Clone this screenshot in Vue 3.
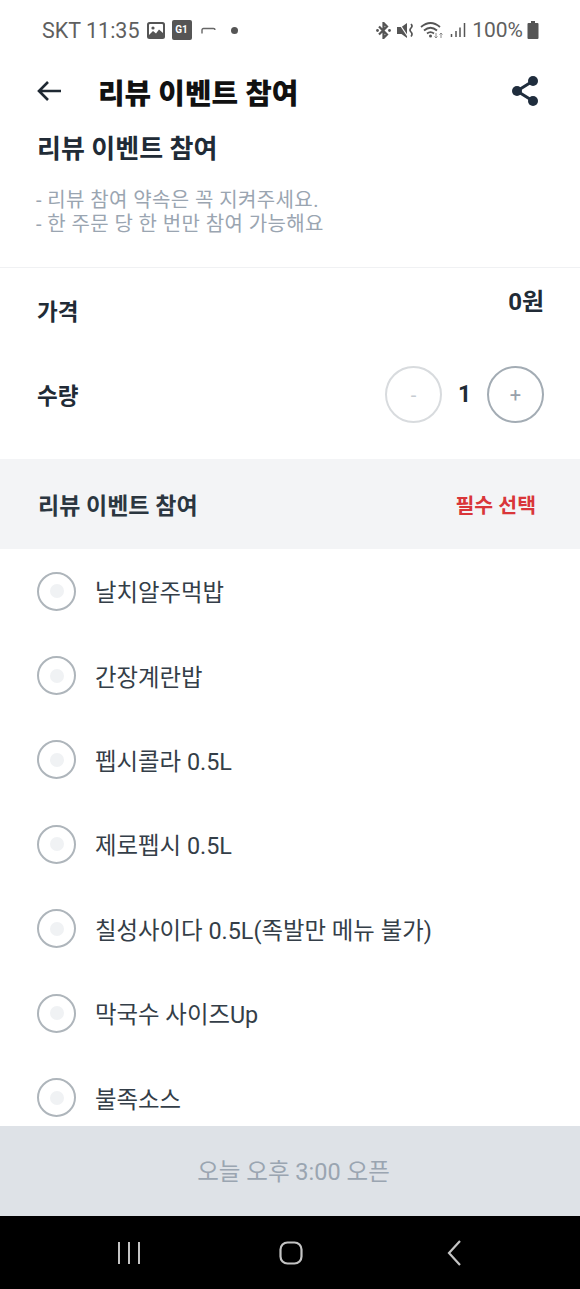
<template>
  <div class="phone">
    <!-- 상태바 -->
    <div class="status-bar">
      <div class="status-left">
        <span>SKT 11:35</span>
        <svg width="18" height="17" viewBox="0 0 18 17">
          <rect x="0" y="0" width="18" height="17" rx="2.500" fill="#555" />
          <rect x="2" y="2" width="14" height="13" rx="1" fill="#fff" />
          <path d="M2 13l4-4 3 2.500 3-4 4 3.500V15H2z" fill="#555" />
          <circle cx="6" cy="6" r="1.600" fill="#555" />
        </svg>
        <span class="g1">G1</span>
        <svg class="hook" width="15" height="7" viewBox="0 0 15 7">
          <path d="M1 6.500V3q0-1.500 1.500-1.500h10q1.500 0 1.500 1.500" fill="none" stroke="#666" stroke-width="1.400" />
        </svg>
        <span class="dot"></span>
      </div>
      <div class="status-right">
        <svg width="15" height="17" viewBox="0 0 15 17">
          <path d="M3 4.500l8 8-3.500 3.500V1L11 4.500l-8 8" fill="none" stroke="#555" stroke-width="2.200" />
          <circle cx="1.500" cy="8.500" r="1.400" fill="#555" />
          <circle cx="13.500" cy="8.500" r="1.400" fill="#555" />
        </svg>
        <svg width="17" height="17" viewBox="0 0 17 17">
          <path d="M0 5h4.500L10 1v15l-5.500-4H0z" fill="#555" />
          <path d="M1.500 0.500l10 15" stroke="#fff" stroke-width="1.200" />
          <path d="M14 2q2 2 0 4t0 4 0 4.500" fill="none" stroke="#555" stroke-width="1.700" />
        </svg>
        <svg width="24" height="18" viewBox="0 0 24 18">
          <path d="M1 6q9.500-8 19 0M4 9.500q6.500-5.500 13 0M7 12.500q3.500-2.800 7 0" fill="none" stroke="#555" stroke-width="1.800" />
          <circle cx="10.500" cy="15" r="1.500" fill="#555" />
          <path d="M16 12v5M14.500 15.500l1.500 1.500 1.500-1.500M21 17v-5M19.500 13.500l1.500-1.500 1.500 1.500" fill="none" stroke="#888" stroke-width="1" />
        </svg>
        <svg width="16" height="16" viewBox="0 0 16 16">
          <path d="M1.500 12v3M6 9v6M10 5.500V15M14.500 1v14" stroke="#555" stroke-width="1.500" />
        </svg>
        <span class="pct">100%</span>
        <svg class="battery" width="12" height="18" viewBox="0 0 12 18">
          <path d="M4 0h4v2h2.500a1 1 0 0 1 1 1v14a1 1 0 0 1-1 1h-9a1 1 0 0 1-1-1V3a1 1 0 0 1 1-1H4z" fill="#555" />
        </svg>
      </div>
    </div>

    <!-- 헤더 -->
    <div class="header">
      <svg class="back" width="24" height="22" viewBox="0 0 24 22">
        <path d="M24 11H2M11 2l-9 9 9 9" fill="none" stroke="#1f2933" stroke-width="2.600" />
      </svg>
      <div class="header-title">리뷰 이벤트 참여</div>
      <svg width="28" height="32" viewBox="0 0 28 32">
        <path d="M22 6L6 16l16 10" fill="none" stroke="#1f2d3d" stroke-width="3" />
        <circle cx="22" cy="6" r="5" fill="#1f2d3d" />
        <circle cx="6" cy="16" r="5" fill="#1f2d3d" />
        <circle cx="22" cy="26" r="5" fill="#1f2d3d" />
      </svg>
    </div>

    <div class="content">
      <div class="intro">
        <div class="intro-title">리뷰 이벤트 참여</div>
        <div class="intro-desc">- 리뷰 참여 약속은 꼭 지켜주세요.</div>
        <div class="intro-desc">- 한 주문 당 한 번만 참여 가능해요</div>
      </div>

      <div class="price-box">
        <div class="price-row">
          <span class="label">가격</span>
          <span class="price">0원</span>
        </div>
        <div class="qty-row">
          <span class="label qty-label">수량</span>
          <div class="qty">
            <span class="qty-btn minus">-</span>
            <span class="qty-num">1</span>
            <span class="qty-btn plus">+</span>
          </div>
        </div>
      </div>

      <div class="group-head">
        <span>리뷰 이벤트 참여</span>
        <span class="required">필수 선택</span>
      </div>

      <div class="options">
        <div v-for="item in options" :key="item" class="option">
          <span class="radio"><i></i></span>
          <span class="option-name">{{ item }}</span>
        </div>
      </div>
    </div>

    <div class="order-btn">오늘 오후 3:00 오픈</div>

    <!-- 하단 내비게이션 -->
    <div class="nav-bar">
      <svg width="24" height="24" viewBox="0 0 24 24">
        <path d="M2 1v22M12 1v22M22 1v22" stroke="#c4c4c4" stroke-width="2" />
      </svg>
      <svg class="home" width="24" height="24" viewBox="0 0 24 24">
        <rect x="1.500" y="1.500" width="21" height="21" rx="7" fill="none" stroke="#c4c4c4" stroke-width="2.200" />
      </svg>
      <svg width="14" height="26" viewBox="0 0 14 26">
        <path d="M13 1L2 13l11 12" fill="none" stroke="#c4c4c4" stroke-width="2.200" />
      </svg>
    </div>
  </div>
</template>

<script setup>
const options = [
  '날치알주먹밥',
  '간장계란밥',
  '펩시콜라 0.5L',
  '제로펩시 0.5L',
  '칠성사이다 0.5L(족발만 메뉴 불가)',
  '막국수 사이즈Up',
  '불족소스'
]
</script>

<style>
html,
body {
  margin: 0;
  background: #fff;
}
</style>

<style scoped>
.phone {
  display: flex;
  flex-direction: column;
  width: 580px;
  height: 1289px;
  overflow: hidden;
  font-family: Roboto, "Noto Sans CJK KR", sans-serif;
  color: #212b36;
  background: #fff;
}

.status-bar {
  display: flex;
  flex-shrink: 0;
  justify-content: space-between;
  align-items: center;
  box-sizing: border-box;
  height: 58px;
  padding: 2px 41px 0 42px;
  font-size: 21.5px;
  color: #5f5f5f;
}

.status-left,
.status-right {
  display: flex;
  align-items: center;
}

.status-left {
  gap: 7px;
}

.status-right {
  gap: 6px;
}

.g1 {
  width: 20px;
  height: 20px;
  border-radius: 2px;
  background: #555;
  color: #fff;
  font-size: 10px;
  line-height: 20px;
  text-align: center;
  font-weight: 700;
}

.hook {
  margin-left: 2px;
}

.dot {
  width: 7px;
  height: 7px;
  margin-left: 8px;
  border-radius: 50%;
  background: #555;
}

.pct {
  font-size: 21px;
}

.battery {
  margin-left: -2px;
}

.header {
  display: flex;
  flex-shrink: 0;
  align-items: center;
  height: 66px;
  padding: 0 41px 0 37px;
}

.back {
  margin-right: 37px;
}

.header-title {
  flex: 1;
  font-size: 28.9px;
  font-weight: 900;
  color: #111;
}

.content {
  flex: 1;
  min-height: 0;
  overflow: hidden;
}

.intro {
  height: 138px;
  padding: 5px 37px 0;
  border-bottom: 1px solid #f0f1f3;
}

.intro-title {
  margin-bottom: 19px;
  font-size: 26px;
  line-height: 40px;
  font-weight: 700;
}

.intro-desc {
  margin-left: -1px;
  font-size: 20px;
  line-height: 24px;
  color: #9aa5b1;
  letter-spacing: 0.4px;
}

.price-box {
  height: 191px;
  padding: 0 36px 0 37px;
}

.price-row {
  display: flex;
  justify-content: space-between;
  height: 98px;
}

.label {
  font-size: 22.5px;
  font-weight: 700;
}

.price-row .label {
  margin-top: 26px;
}

.qty-label {
  margin-bottom: 2px;
}

.price {
  margin-top: 14px;
  font-size: 24px;
  font-weight: 700;
}

.qty-row {
  display: flex;
  justify-content: space-between;
  align-items: center;
  height: 57px;
}

.qty {
  display: flex;
  align-items: center;
}

.qty-btn {
  display: flex;
  justify-content: center;
  align-items: center;
  box-sizing: border-box;
  width: 57px;
  height: 57px;
  border-radius: 50%;
  font-size: 20px;
}

.minus {
  border: 2px solid #d8dbde;
  color: #c6ccd2;
}

.plus {
  border: 2px solid #a3acb4;
  color: #97a1ab;
}

.qty-num {
  width: 45px;
  text-align: center;
  font-size: 23px;
  font-weight: 700;
}

.group-head {
  display: flex;
  justify-content: space-between;
  align-items: center;
  height: 90px;
  padding: 0 44px 0 38px;
  background: #f3f4f6;
  font-size: 23px;
  font-weight: 700;
  color: #2b3640;
}

.required {
  font-size: 20.5px;
  color: #d9363a;
}

.option {
  display: flex;
  align-items: center;
  gap: 19px;
  height: 84.4px;
  padding-left: 37px;
}

.radio {
  display: flex;
  flex-shrink: 0;
  justify-content: center;
  align-items: center;
  box-sizing: border-box;
  width: 39px;
  height: 39px;
  border: 2px solid #aeb5bb;
  border-radius: 50%;
}

.radio i {
  width: 14px;
  height: 14px;
  border-radius: 50%;
  background: #f0f2f4;
}

.option-name {
  font-size: 23.4px;
  color: #343e48;
}

.order-btn {
  flex-shrink: 0;
  box-sizing: border-box;
  height: 90px;
  padding: 2px 0 0 7px;
  line-height: 88px;
  text-align: center;
  font-size: 23.5px;
  color: #9aa5b1;
  background: #dee2e7;
}

.nav-bar {
  display: flex;
  flex-shrink: 0;
  justify-content: space-between;
  align-items: center;
  height: 73px;
  padding: 0 119px 0 117px;
  background: #000;
}

.home {
  margin-right: 6px;
}
</style>
